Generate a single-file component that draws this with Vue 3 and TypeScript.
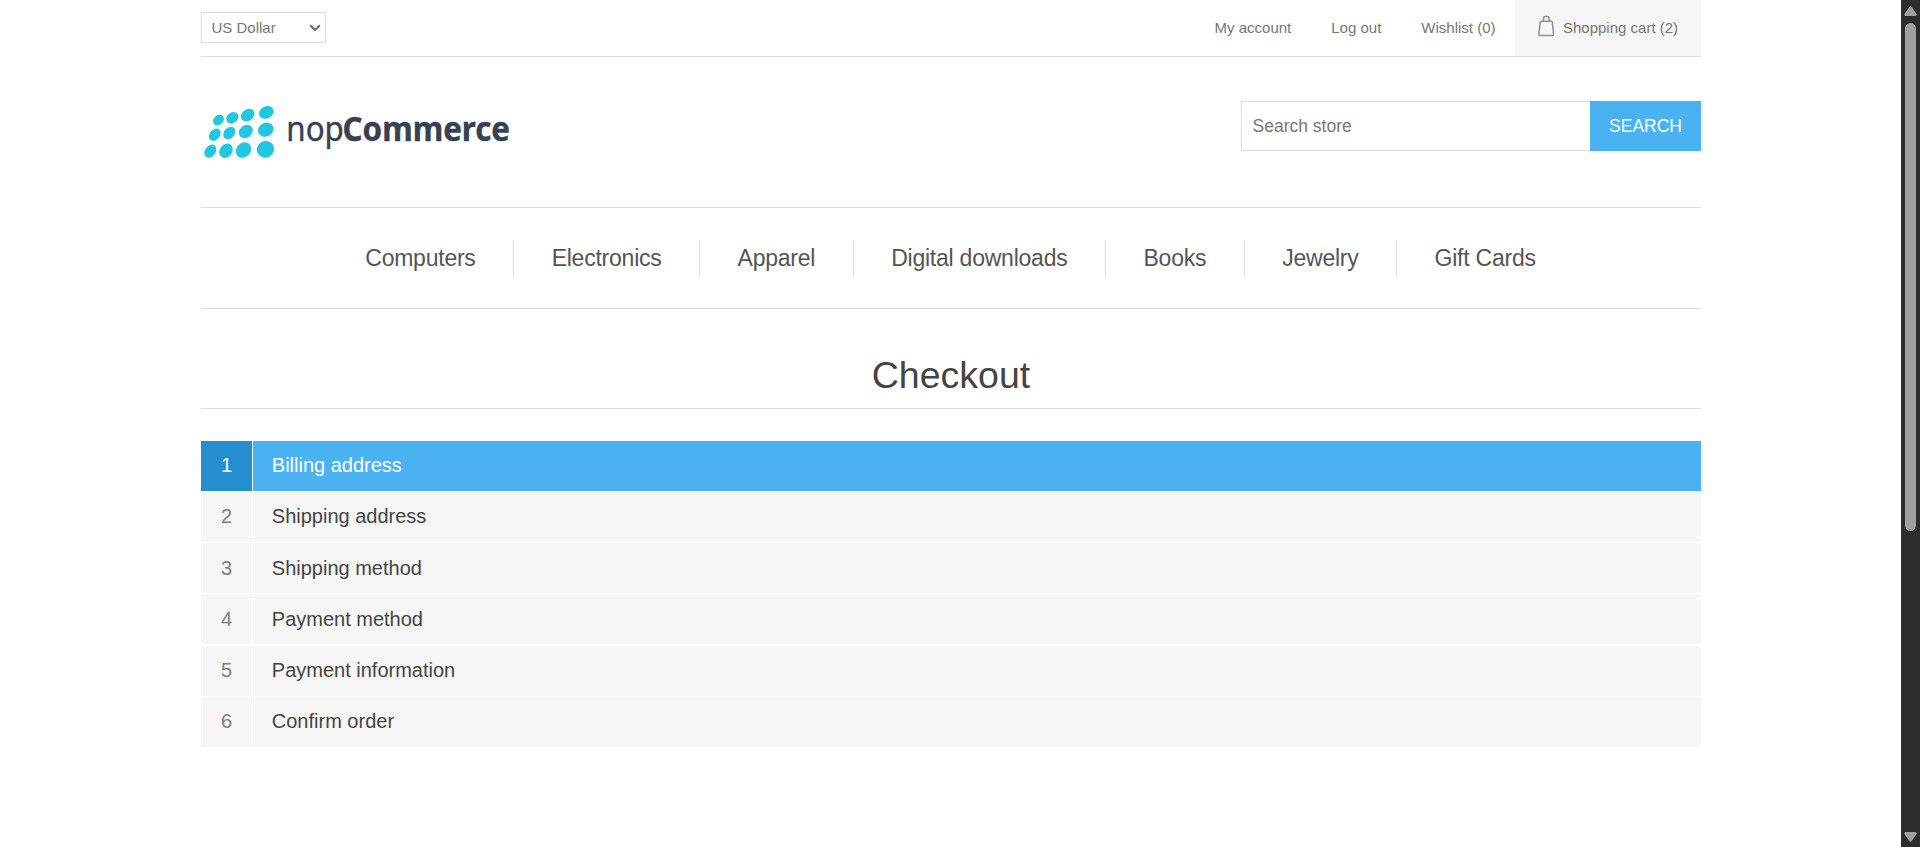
<script setup lang="ts">
import { ref } from 'vue'

interface Step {
  id: number
  title: string
}

const currency = ref('US Dollar')
const query = ref('')
const activeStep = ref(1)

const accountLinks: string[] = ['My account', 'Log out', 'Wishlist (0)']
const categories: string[] = [
  'Computers',
  'Electronics',
  'Apparel',
  'Digital downloads',
  'Books',
  'Jewelry',
  'Gift Cards',
]
const steps: Step[] = [
  { id: 1, title: 'Billing address' },
  { id: 2, title: 'Shipping address' },
  { id: 3, title: 'Shipping method' },
  { id: 4, title: 'Payment method' },
  { id: 5, title: 'Payment information' },
  { id: 6, title: 'Confirm order' },
]

// Logo dots: centre x, centre y, long radius, short radius, rotation
const dots: number[][] = [
  [17.5, 20, 6, 4.7, -42], [31.3, 17.8, 6.7, 5.3, -40], [46.7, 15.1, 7.2, 5.7, -36], [65.3, 12.4, 7.6, 6, -24],
  [13.8, 34.7, 6.9, 5, -48], [28.3, 33, 6.9, 5.3, -46], [44.8, 31.4, 7.5, 6.2, -40], [64.8, 29.7, 8.1, 6.9, -24],
  [9.3, 51.2, 7.2, 5.3, -55], [25, 50.7, 7.7, 6.2, -52], [42.5, 50, 8.4, 7.1, -48], [64.5, 49.3, 8.7, 8.3, -30],
]
</script>

<template>
  <div class="screen">
    <div class="page">
      <header>
        <div class="topbar">
          <div class="currency">
            <select v-model="currency" aria-label="Currency">
              <option>US Dollar</option>
            </select>
            <svg class="chevron" width="12" height="8" viewBox="0 0 12 8">
              <path d="M1.2 1.2 6 6 10.8 1.2" fill="none" stroke="#707070" stroke-width="2.2" />
            </svg>
          </div>
          <nav class="account">
            <a v-for="link in accountLinks" :key="link">{{ link }}</a>
            <a class="cart">
              <svg width="18" height="22" viewBox="0 0 18 22" fill="none" stroke="#8f8f8f" stroke-width="1.5">
                <path d="M6.5 6V3.3Q6.5 1.6 8.2 1.6H10.4Q12.1 1.6 12.1 3.3V6" />
                <path d="M4.4 6.2H14.2Q15.2 6.2 15.4 7.2L16.5 19Q16.7 20.6 15.2 20.6H3.2Q1.7 20.6 1.9 19L3.2 7.2Q3.4 6.2 4.4 6.2Z" />
              </svg>
              <span>Shopping cart (2)</span>
            </a>
          </nav>
        </div>

        <div class="brand-row">
          <svg class="logo" width="312" height="62" viewBox="0 0 312 62">
            <g fill="#21c7e0">
              <ellipse
                v-for="(d, i) in dots"
                :key="i"
                :cx="d[0]"
                :cy="d[1]"
                :rx="d[2]"
                :ry="d[3]"
                :transform="`rotate(${d[4]} ${d[0]} ${d[1]})`"
              />
            </g>
            <text class="word" x="85.3" y="41" textLength="57.5" lengthAdjust="spacingAndGlyphs">nop</text>
            <text class="word bold" x="141.5" y="41" textLength="167.5" lengthAdjust="spacingAndGlyphs">Commerce</text>
          </svg>
          <form class="search" @submit.prevent>
            <input v-model="query" type="text" placeholder="Search store" />
            <button type="submit">SEARCH</button>
          </form>
        </div>
      </header>

      <nav class="menu">
        <a v-for="category in categories" :key="category">{{ category }}</a>
      </nav>

      <main>
        <h1>Checkout</h1>
        <ol class="steps">
          <li v-for="step in steps" :key="step.id" :class="{ active: step.id === activeStep }">
            <span class="number">{{ step.id }}</span>
            <h2>{{ step.title }}</h2>
          </li>
        </ol>
      </main>
    </div>

    <aside class="scrollbar">
      <svg width="13" height="10" viewBox="0 0 13 10">
        <path d="M5.2 .9Q6.5-.6 7.8 .9L12.5 8Q13 10 11.5 10H1.5Q0 10 .5 8Z" fill="#9f9f9f" />
      </svg>
      <div class="thumb"></div>
      <svg class="down" width="13" height="10" viewBox="0 0 13 10">
        <path d="M5.2 9.1Q6.5 10.6 7.8 9.1L12.5 2Q13 0 11.5 0H1.5Q0 0 .5 2Z" fill="#9f9f9f" />
      </svg>
    </aside>
  </div>
</template>

<style>
body {
  margin: 0;
  overflow: hidden;
  background: #fff;
}
</style>

<style scoped>
.screen {
  display: flex;
  height: 847px;
  font-family: 'Liberation Sans', Arial, sans-serif;
  color: #777;
}
.screen * {
  box-sizing: border-box;
}
.page {
  width: 1500px;
  margin-left: 201px;
}
.topbar {
  display: flex;
  justify-content: space-between;
  height: 57px;
  border-bottom: 1px solid #ddd;
  font-size: 15px;
}
.currency {
  position: relative;
  width: 125px;
  height: 31px;
  margin-top: 12px;
}
.currency select {
  width: 100%;
  height: 100%;
  padding: 0 9.5px;
  border: 1px solid #ddd;
  border-radius: 0;
  background: #fff;
  color: #777;
  font: inherit;
  appearance: none;
}
.chevron {
  position: absolute;
  right: 5px;
  top: 12px;
}
.account {
  display: flex;
  line-height: 56px;
}
.account a {
  margin-right: 40px;
}
.account a:nth-child(3) {
  margin-right: 19.5px;
}
.account .cart {
  display: flex;
  width: 186px;
  height: 56px;
  margin: 0;
  padding-left: 22px;
  background: #f6f6f6;
}
.cart svg {
  margin: 15px 8px 0 0;
}
.brand-row {
  display: flex;
  justify-content: space-between;
  height: 151px;
  border-bottom: 1px solid #ddd;
}
.logo {
  margin-top: 43px;
  overflow: visible;
}
.word {
  font-family: 'Noto Sans', 'Open Sans', sans-serif;
  font-size: 34px;
  fill: #374151;
  stroke: #374151;
  stroke-width: 0.4px;
}
.word.bold {
  font-weight: 700;
}
.search {
  display: flex;
  height: 50px;
  margin-top: 44px;
}
.search input {
  width: 349px;
  padding: 0 10.5px;
  border: 1px solid #ddd;
  border-right: 0;
  font: 17.5px 'Liberation Sans', Arial, sans-serif;
  outline: none;
}
.search input::placeholder {
  color: #777;
}
.search button {
  width: 111px;
  padding: 0;
  border: 0;
  background: #4ab2f1;
  color: #fff;
  font: 17.5px 'Liberation Sans', Arial, sans-serif;
}
.menu {
  display: flex;
  justify-content: center;
  align-items: center;
  height: 101px;
  padding-right: 1px;
  border-bottom: 1px solid #ddd;
  color: #555;
  font-size: 23px;
  letter-spacing: -0.235px;
}
.menu a {
  height: 37px;
  padding: 0 37.5px;
  line-height: 36px;
}
.menu a + a {
  border-left: 1px solid #ddd;
}
h1 {
  height: 100px;
  margin: 0 0 32px;
  padding-top: 45px;
  border-bottom: 1px solid #ddd;
  color: #444;
  font-size: 37.5px;
  font-weight: 400;
  line-height: 43px;
  text-align: center;
}
.steps {
  display: grid;
  gap: 1px;
  margin: 0;
  padding: 0;
  list-style: none;
}
.steps li {
  display: grid;
  grid-template-columns: 51px 1fr;
  gap: 1px;
  height: 50px;
  font-size: 20px;
  line-height: 49px;
}
.steps li:nth-child(3),
.steps li:nth-child(4) {
  grid-template-rows: 50px;
  line-height: 51px;
}
.steps li:nth-child(5) {
  margin-top: 1px;
}
.number {
  background: #f6f6f6;
  color: #808080;
  text-align: center;
}
.steps h2 {
  margin: 0;
  padding-left: 18.8px;
  background: #f6f6f6;
  color: #444;
  font-size: 20px;
  font-weight: 400;
}
.active .number {
  background: #248ece;
  color: #fff;
}
.active h2 {
  background: #4ab2f1;
  color: #fff;
}
.scrollbar {
  display: flex;
  flex-direction: column;
  align-items: center;
  width: 19px;
  height: 847px;
  margin-left: auto;
  padding: 6px 0 5px;
  background: #2c2c2c;
}
.thumb {
  width: 11px;
  height: 508px;
  margin-top: 7px;
  border-radius: 6px;
  background: #9f9f9f;
}
.down {
  margin-top: auto;
}
</style>
